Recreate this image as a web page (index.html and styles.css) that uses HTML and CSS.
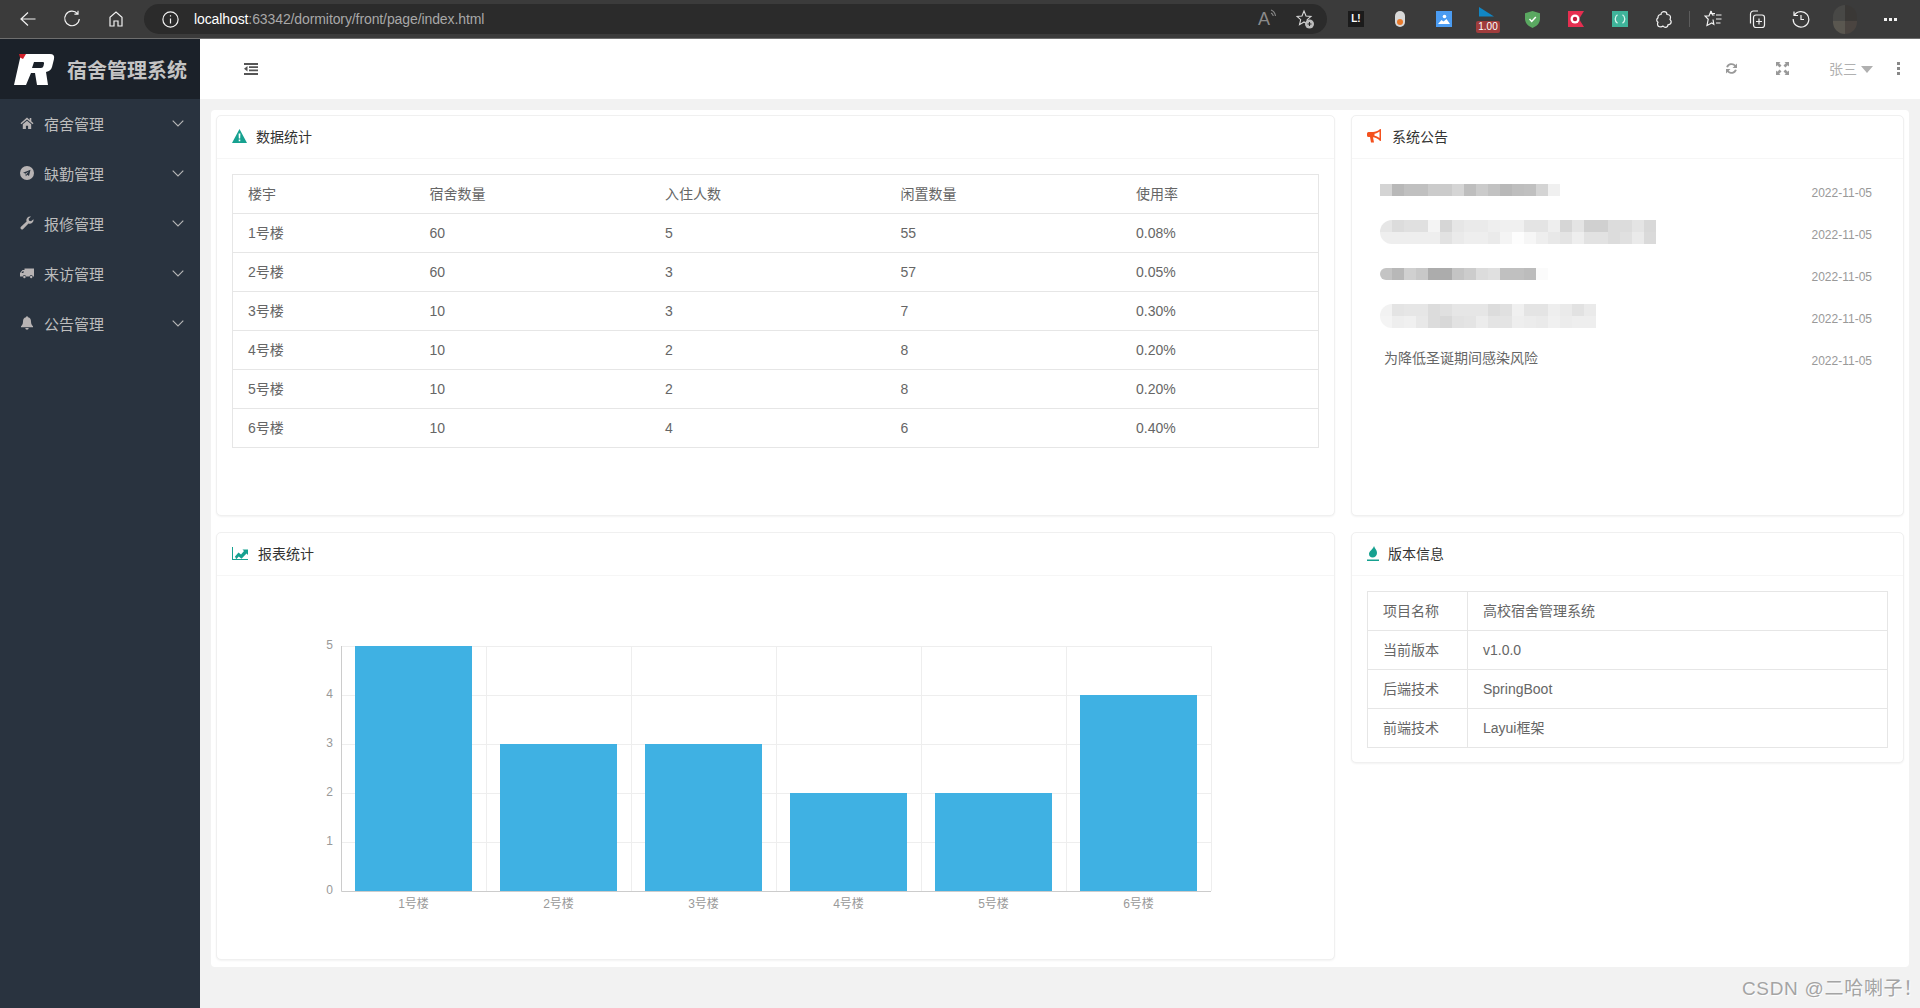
FILE: index.html
```html
<!DOCTYPE html>
<html lang="zh-CN">
<head>
  <meta charset="UTF-8">
  <title>宿舍管理系统</title>
  <link rel="stylesheet" href="styles.css">
</head>
<body>

  <!-- Browser toolbar -->
  <div class="browser-bar">
    <div class="tool"><svg width="18" height="18" viewBox="0 0 18 18" class="line"><path d="M16.500 9H2M9 2.500 2 9l7 6.500"/></svg></div>
    <div class="tool"><svg width="18" height="18" viewBox="0 0 18 18" class="line"><path d="M14.500 3.600A7.300 7.300 0 1 0 16.300 9M15 .8v3.400h-3.600"/></svg></div>
    <div class="tool"><svg width="18" height="18" viewBox="0 0 18 18" class="line"><path d="M3 16V7.200L9 2l6 5.200V16h-4v-5H7v5z"/></svg></div>
    <div class="address">
      <svg width="17" height="17" viewBox="0 0 17 17" class="line"><circle cx="8.500" cy="8.500" r="7.600"/><path d="M8.500 7.500v5M8.500 4.200v1.400"/></svg>
      <div class="url"><span class="url-host">localhost</span>:63342/dormitory/front/page/index.html</div>
      <div class="read-aloud">A<svg width="7" height="11" viewBox="0 0 7 11" class="line-dim"><path d="M1 1c3 1 4 3 4.500 6M1 4c1.500.6 2 1.500 2.300 3"/></svg></div>
      <svg width="19" height="21" viewBox="0 0 19 21" class="line-dim fav"><path d="M8 2l2 5 5 .4-3.800 3.300 1.200 5L8 13l-4.500 2.700 1.200-5L1 7.400 6 7z"/><circle class="fav-dot" cx="13.500" cy="15" r="4.500"/><path class="fav-plus" d="M11.500 15h4M13.500 13v4"/></svg>
    </div>
    <div class="ext"><span class="ext-l">L!</span></div>
    <div class="ext"><span class="ext-pill"><i></i></span></div>
    <div class="ext"><svg width="16" height="16" viewBox="0 0 16 16"><rect width="16" height="16" fill="#4b9cf2"/><circle cx="8.500" cy="5.500" r="1.800" fill="#fff"/><path d="M2 13l3.500-4 2 1.500L10.500 8l3.500 5z" fill="#fff"/></svg></div>
    <div class="ext ext-speed"><svg width="15" height="10" viewBox="0 0 15 10"><path d="M0 0l15 9.500H0z" fill="#1186c4"/></svg><span class="speed-badge">1.00</span></div>
    <div class="ext"><svg width="15" height="17" viewBox="0 0 15 17"><path d="M7.500 0l7.500 2.200V8c0 4.500-4 7.500-7.500 9C4 15.500 0 12.500 0 8V2.200z" fill="#5aa861"/><path d="M4.500 8l2.200 2.400L10.800 6" fill="none" stroke="#fff" stroke-width="1.500"/></svg></div>
    <div class="ext"><svg width="16" height="16" viewBox="0 0 16 16"><path d="M0 0h16l-5 8 5 8H0z" fill="#e62e50"/><circle cx="7" cy="8" r="4.500" fill="#fff"/><circle cx="7" cy="8" r="2.200" fill="#c4183a"/></svg></div>
    <div class="ext"><svg width="16" height="16" viewBox="0 0 16 16"><rect width="16" height="16" fill="#3fb49a"/><path d="M5.500 3.800a5 5 0 0 0 0 8.400M10.500 12.200a5 5 0 0 0 0-8.400" fill="none" stroke="#d8f3ec" stroke-width="1.300"/></svg></div>
    <div class="ext"><svg width="16" height="17" viewBox="0 0 16 17" class="line"><path d="M5 3.500C5 1.500 6.500.7 8 .7s3 .8 3 2.800c2 0 3.500 1 3.500 3 0 .8-.2 1.300-.5 1.800.6.700 1.200 1.500 1.200 2.500 0 2-1.300 2.800-3.200 3 0 1.500-1.200 2.500-2.700 2.500-1 0-1.600-.5-2.300-1.200-.7.500-1.300.8-2 .8C2.500 15.900 1.500 14.500 1.500 13c0-.7.200-1.200.5-1.700C1.200 10.700.7 9.900.7 9c0-1 .7-1.800 1.300-2.300C1.800 5 3 3.500 5 3.500z"/></svg></div>
    <div class="bar-sep"></div>
    <div class="ext"><svg width="18" height="18" viewBox="0 0 18 18" class="line"><path d="M11 3.500H6.300L7 1 5 6H1l3.200 3.300L3 15.500l4.800-2.500 2 1.200L9 9.500"/><path d="M7 1l1.500 4h2M12 5h5.500M12 9h5.500M12 13h4.500"/></svg></div>
    <div class="ext"><svg width="18" height="19" viewBox="0 0 18 19" class="line"><path d="M2.500 13.500V4a3 3 0 0 1 3-3H10"/><rect x="5.500" y="5" width="11" height="12.500" rx="2.500"/><path d="M11 8.500v6M8 11.500h6"/></svg></div>
    <div class="ext"><svg width="18" height="18" viewBox="0 0 18 18" class="line"><path d="M2.200 5.500A7.800 7.800 0 1 1 1.200 9M2 1.500v4h4M9 5v4.500h3"/></svg></div>
    <div class="ext"><span class="avatar"></span></div>
    <div class="ext ext-last"><svg width="13" height="3" viewBox="0 0 13 3" class="dots"><rect width="3" height="3"/><rect x="5" width="3" height="3"/><rect x="10" width="3" height="3"/></svg></div>
  </div>

  <div class="app">
    <!-- Sidebar -->
    <aside class="sidebar">
      <div class="logo">
        <svg class="logo-mark" width="41" height="31" viewBox="0 0 41 31">
          <path d="M7 0H36Q41 0 40 5L38 13Q37 17 32 18L34 31H23L21 19H17L12 31H0Z M20 8 18 14H27Q29 14 29.500 12L30 9.500Q30.500 8 29 8Z" fill="#fff" fill-rule="evenodd"/>
          <path d="M5 0H12L9 5 6 3.500Z" fill="#d3202a"/>
        </svg>
        <div class="logo-title">宿舍管理系统</div>
      </div>
      <ul class="menu">
        <li class="menu-item">
          <svg class="menu-icon" viewBox="0 0 14 14"><path d="M7 1.500 .5 7.300l.9 1L7 3.400l5.600 4.900.9-1L11.300 5.300V2H9.700v1.900zM2.800 8.300V13h3.100V9.700h2.200V13h3.100V8.300L7 4.700z"/></svg>
          <span class="menu-text">宿舍管理</span>
          <svg class="chevron" width="12" height="7" viewBox="0 0 12 7"><path d="M.7.7 6 6 11.300.7"/></svg>
        </li>
        <li class="menu-item">
          <svg class="menu-icon" viewBox="0 0 14 14"><circle cx="7" cy="7" r="7"/><path class="menu-cut" d="M10.500 3.700 3 6.700l2.200.9.700 2.600 1.400-1.500 1.700 1.300zM5.500 7.500l3.300-2-2.500 2.700-.2 1.200z"/></svg>
          <span class="menu-text">缺勤管理</span>
          <svg class="chevron" width="12" height="7" viewBox="0 0 12 7"><path d="M.7.7 6 6 11.300.7"/></svg>
        </li>
        <li class="menu-item">
          <svg class="menu-icon" viewBox="0 0 14 14"><path d="M13.500 3.200a3.800 3.800 0 0 1-5 4.200L3.200 13a1.500 1.500 0 0 1-2.200-2.200l5.600-5.300a3.800 3.800 0 0 1 4.400-5L8.600 2.800 9 4.800l2 .4z"/></svg>
          <span class="menu-text">报修管理</span>
          <svg class="chevron" width="12" height="7" viewBox="0 0 12 7"><path d="M.7.7 6 6 11.300.7"/></svg>
        </li>
        <li class="menu-item">
          <svg class="menu-icon" viewBox="0 0 14 14"><path d="M4.500 2.500H14v8h-1.200a1.600 1.600 0 0 0-3.200 0H6a1.600 1.600 0 0 0-3.200 0H0V7l2.500-3h2zM1.300 7h2.200V5H3z"/><circle cx="4.400" cy="11" r="1.200"/><circle cx="11.200" cy="11" r="1.200"/></svg>
          <span class="menu-text">来访管理</span>
          <svg class="chevron" width="12" height="7" viewBox="0 0 12 7"><path d="M.7.7 6 6 11.300.7"/></svg>
        </li>
        <li class="menu-item">
          <svg class="menu-icon" viewBox="0 0 14 14"><path d="M7 .3a1 1 0 0 1 1 1c2.200.5 3 2.200 3 4.200 0 2.700 1 3.700 2 4.800v1H1v-1c1-1.100 2-2.100 2-4.800 0-2 .8-3.700 3-4.200a1 1 0 0 1 1-1zM5.300 12h3.400a1.700 1.700 0 0 1-3.400 0z"/></svg>
          <span class="menu-text">公告管理</span>
          <svg class="chevron" width="12" height="7" viewBox="0 0 12 7"><path d="M.7.7 6 6 11.300.7"/></svg>
        </li>
      </ul>
    </aside>

    <div class="main">
      <!-- Top header -->
      <header class="header">
        <svg class="fold" width="14" height="12" viewBox="0 0 14 12"><path d="M0 0h14v2H0zM5 3.300h9v1.700H5zM5 6.500h9v1.700H5zM0 10h14v2H0zM3.500 3v5.500L0 5.800z"/></svg>
        <div class="header-right">
          <svg class="head-icon" width="13" height="13" viewBox="0 0 13 13"><path d="M1.200 5A5.500 5.500 0 0 1 10.500 3L12 1.500V6H7.500L9.300 4.200A3.800 3.800 0 0 0 3 5.500zM11.800 8A5.500 5.500 0 0 1 2.500 10L1 11.500V7h4.500L3.700 8.800A3.800 3.800 0 0 0 10 7.500z"/></svg>
          <svg class="head-icon head-expand" width="13" height="13" viewBox="0 0 13 13"><path d="M0 0h4.500L3.200 1.300 5.500 3.600 3.600 5.500 1.300 3.200 0 4.500zM13 0v4.500l-1.300-1.300-2.300 2.300-1.900-1.900 2.300-2.300L8.500 0zM0 13V8.500l1.300 1.300 2.300-2.300 1.900 1.900-2.300 2.300L4.500 13zM13 13H8.500l1.300-1.300-2.300-2.300 1.900-1.900 2.300 2.300L13 8.500z"/></svg>
          <div class="user">张三<span class="caret"></span></div>
          <div class="more"><i></i><i></i><i></i></div>
        </div>
      </header>

      <main class="content">
        <div class="dash">
          <!-- 数据统计 -->
          <section class="card">
            <div class="card-head">
              <svg width="15" height="14" viewBox="0 0 15 14"><path class="teal" d="M7.500 0 15 14H0zM6.600 4.500l.2 5h1.400l.2-5zM6.700 10.500v1.800h1.600v-1.800z" fill-rule="evenodd"/></svg>
              <span class="card-title t-stats">数据统计</span>
            </div>
            <div class="card-body">
              <table class="grid-table stats">
                <thead>
                  <tr><th>楼宇</th><th>宿舍数量</th><th>入住人数</th><th>闲置数量</th><th>使用率</th></tr>
                </thead>
                <tbody>
                  <tr><td>1号楼</td><td>60</td><td>5</td><td>55</td><td>0.08%</td></tr>
                  <tr><td>2号楼</td><td>60</td><td>3</td><td>57</td><td>0.05%</td></tr>
                  <tr><td>3号楼</td><td>10</td><td>3</td><td>7</td><td>0.30%</td></tr>
                  <tr><td>4号楼</td><td>10</td><td>2</td><td>8</td><td>0.20%</td></tr>
                  <tr><td>5号楼</td><td>10</td><td>2</td><td>8</td><td>0.20%</td></tr>
                  <tr><td>6号楼</td><td>10</td><td>4</td><td>6</td><td>0.40%</td></tr>
                </tbody>
              </table>
            </div>
          </section>

          <!-- 系统公告 -->
          <section class="card">
            <div class="card-head">
              <svg width="15" height="14" viewBox="0 0 15 14"><path class="orange" d="M14 0v12l-1.200-.3C11 9.500 8 8.500 6 8.300L7 13.500H4L3 8H1.500A1.500 1.500 0 0 1 0 6.500V4.500A1.500 1.500 0 0 1 1.500 3H6c2 0 5-1 6.800-2.800zM12.500 2.500C11 3.700 9 4.500 7.500 4.700v2c1.500.2 3.500 1 5 2.200z" fill-rule="evenodd"/></svg>
              <span class="card-title t-notice">系统公告</span>
            </div>
            <ul class="notices">
              <li class="notice"><div class="mosaic m1"></div><div class="notice-date">2022-11-05</div></li>
              <li class="notice"><div class="mosaic m2"></div><div class="notice-date">2022-11-05</div></li>
              <li class="notice"><div class="mosaic m3"></div><div class="notice-date">2022-11-05</div></li>
              <li class="notice"><div class="mosaic m4"></div><div class="notice-date">2022-11-05</div></li>
              <li class="notice"><div class="notice-text">为降低圣诞期间感染风险</div><div class="notice-date">2022-11-05</div></li>
            </ul>
          </section>

          <!-- 报表统计 -->
          <section class="card">
            <div class="card-head">
              <svg width="16" height="13" viewBox="0 0 16 13"><path class="teal" d="M0 0h1v12h15v1H0zM3 9.500l3.500-4 2.500 2L12 4l-1.500-1.500H16V8l-1.500-1.500-5 5.200-2.700-2.200-2.600 2.700z"/></svg>
              <span class="card-title t-chart">报表统计</span>
            </div>
            <svg class="chart" viewBox="217 576 1117 384" width="1117" height="384">
              <g class="grid-lines">
                <path d="M341 646.500H1211M341 695.500H1211M341 744.500H1211M341 793.500H1211M341 842.500H1211"/>
                <path d="M486.500 646V891M631.500 646V891M776.500 646V891M921.500 646V891M1066.500 646V891M1211.500 646V891"/>
              </g>
              <g class="bars">
                <rect x="355" y="646" width="117" height="245"/>
                <rect x="500" y="744" width="117" height="147"/>
                <rect x="645" y="744" width="117" height="147"/>
                <rect x="790" y="793" width="117" height="98"/>
                <rect x="935" y="793" width="117" height="98"/>
                <rect x="1080" y="695" width="117" height="196"/>
              </g>
              <path class="axis" d="M341.500 646V891.500H1211"/>
              <g class="y-labels">
                <text x="333" y="649">5</text>
                <text x="333" y="698">4</text>
                <text x="333" y="747">3</text>
                <text x="333" y="796">2</text>
                <text x="333" y="845">1</text>
                <text x="333" y="894">0</text>
              </g>
              <g class="x-labels">
                <text x="413.500" y="908">1号楼</text>
                <text x="558.500" y="908">2号楼</text>
                <text x="703.500" y="908">3号楼</text>
                <text x="848.500" y="908">4号楼</text>
                <text x="993.500" y="908">5号楼</text>
                <text x="1138.500" y="908">6号楼</text>
              </g>
            </svg>
          </section>

          <!-- 版本信息 -->
          <section class="card card-version">
            <div class="card-head">
              <svg width="12" height="15" viewBox="0 0 12 15"><path class="teal" d="M7 0c1 3 3 4 3 7 0 2.500-2 4.500-4.500 4.500C3.500 11.500 2 10 2 8c0-3 4-4.500 5-8zM0 13.500h12V15H0z"/></svg>
              <span class="card-title t-version">版本信息</span>
            </div>
            <div class="card-body">
              <table class="grid-table version">
                <tbody>
                  <tr><td>项目名称</td><td>高校宿舍管理系统</td></tr>
                  <tr><td>当前版本</td><td>v1.0.0</td></tr>
                  <tr><td>后端技术</td><td>SpringBoot</td></tr>
                  <tr><td>前端技术</td><td>Layui框架</td></tr>
                </tbody>
              </table>
            </div>
          </section>
        </div>
      </main>
    </div>
  </div>

  <div class="watermark">CSDN @二哈喇子！</div>
</body>
</html>
```

FILE: styles.css
```css
* { margin:0; padding:0; box-sizing:border-box; }
html, body { height:100%; overflow:hidden; }
body { display:flex; flex-direction:column; font-family:"Liberation Sans","Noto Sans CJK SC",sans-serif; font-size:14px; color:#666; background:#f2f2f2; }
ul { list-style:none; }

/* Browser toolbar */
.browser-bar { display:flex; align-items:center; height:39px; flex:none; padding:0 8px 0 6px; background:#3b3b3b; border-bottom:1px solid #6e6e6e; }
.tool { width:44px; display:flex; justify-content:center; }
.line { fill:none; stroke:#f2f2f2; stroke-width:1.2; }
.line-dim { fill:none; stroke:#8a8a8a; stroke-width:1.1; }
.address { display:flex; align-items:center; flex:1; height:30px; margin:0 7px 0 6px; padding:0 12px 0 18px; border-radius:15px; background:#2b2b2b; }
.url { flex:1; margin-left:15px; color:#a8a8a8; font-size:14px; letter-spacing:-.1px; }
.url-host { color:#fff; }
.read-aloud { display:flex; align-items:flex-start; margin-right:19px; color:#8a8a8a; font-size:18px; line-height:20px; }
.fav-dot { fill:#bdbdbd; stroke:none; }
.fav-plus { stroke:#2b2b2b; }
.fav { stroke:#d8d8d8; }
.ext { position:relative; width:44px; display:flex; justify-content:center; align-items:center; height:38px; }
.ext-l { width:16px; height:16px; background:#1b1b1b; color:#fff; font-size:10px; font-weight:bold; line-height:16px; text-align:center; }
.ext-pill { display:flex; align-items:flex-end; justify-content:center; width:10px; height:16px; padding-bottom:2px; border-radius:5px; background:#d8d8d8; }
.ext-pill i { width:6px; height:6px; border-radius:50%; background:#e8792b; }
.ext-speed svg { margin:-14px 0 0 -4px; }
.speed-badge { position:absolute; left:10px; top:21px; width:24px; height:12px; border-radius:2px; background:#a03c3c; color:#fff; font-size:10px; line-height:12px; text-align:center; }
.bar-sep { width:1px; height:16px; margin:0 1px 0 3px; background:#5c5c5c; }
.avatar { width:24px; height:29px; border-radius:12px; background:linear-gradient(90deg,#484846 50%,#3a3836 50%) top/100% 55% no-repeat,linear-gradient(90deg,#5a5750 50%,#4a4440 50%); }
.dots { fill:#f2f2f2; }
.ext-last { margin-left:1px; }

.app { flex:1; display:flex; min-height:0; }

/* Sidebar */
.sidebar { width:200px; flex:none; background:#29333f; }
.logo { display:flex; align-items:center; height:60px; padding-left:14px; background:#1b2129; }
.logo-mark { flex:none; }
.logo-title { margin-left:12px; color:#c4c4c4; font-size:20px; font-weight:bold; white-space:nowrap; }
.menu-item { display:flex; align-items:center; height:50px; padding:0 0 2px 20px; color:#bdbdbd; font-size:15px; }
.menu-icon { width:14px; height:14px; flex:none; fill:#b8b4b4; }
.menu-cut { fill:#29333f; }
.menu-text { flex:1; margin-left:10px; }
.chevron { flex:none; margin-right:16px; fill:none; stroke:#b8b8b8; stroke-width:1.1; }

/* Header */
.main { flex:1; display:flex; flex-direction:column; min-width:0; }
.header { display:flex; align-items:center; justify-content:space-between; height:60px; flex:none; padding:0 20px 2px 44px; background:#fff; }
.fold { fill:#555; margin-top:2px; }
.header-right { display:flex; align-items:center; }
.head-icon { fill:#999; }
.head-expand { margin-left:38px; }
.user { display:flex; align-items:center; margin-left:40px; color:#b0b0b0; }
.caret { width:0; height:0; margin:3px 0 0 4px; border:6px solid transparent; border-top:7px solid #b0b0b0; border-bottom:0; }
.more { display:flex; flex-direction:column; gap:2px; margin-left:24px; }
.more i { width:3px; height:3px; background:#888; }

/* Content */
.content { flex:1; min-height:0; padding:11px 11px 41px; }
.dash { display:grid; grid-template-columns:1119px 553px; grid-template-rows:401px 428px; gap:16px; padding:5px 6px 7px 5px; border-radius:4px; background:#fff; }
.card { border:1px solid #f0f0f0; border-radius:5px; background:#fff; box-shadow:0 1px 2px rgba(0,0,0,.05); }
.card-version { align-self:start; height:231px; }
.card-head { display:flex; align-items:center; height:43px; padding:0 0 2px 15px; border-bottom:1px solid #f6f6f6; color:#333; }
.card-body { padding:15px; }
.t-stats { margin-left:9px; }
.t-notice { margin-left:10px; }
.t-chart { margin-left:10px; }
.t-version { margin-left:9px; }
.teal { fill:#16a190; }
.orange { fill:#f4511e; }

/* Tables */
.grid-table { width:100%; border-collapse:collapse; table-layout:fixed; border:1px solid #e6e6e6; }
.grid-table th, .grid-table td { padding:9px 15px; border:1px solid #e6e6e6; line-height:20px; font-weight:normal; text-align:left; }
.stats th, .stats td { border-left:0; border-right:0; }
.stats th:nth-child(1) { width:182px; }
.stats th:nth-child(2), .stats th:nth-child(3), .stats th:nth-child(4) { width:235.5px; }
.version td:first-child { width:100px; }

/* Notices */
.notices { padding:10px 31px 0 28px; }
.notice { display:flex; align-items:center; justify-content:space-between; height:42px; }
.notice-date { margin-top:6px; color:#999; font-size:12px; }
.notice-text { margin:-2px 0 0 4px; }
.mosaic { background-repeat:no-repeat; }
.m1 { width:180px; height:12px; background-image:linear-gradient(90deg,#d4d4d4 0 12px,#b8b8b8 12px 24px,#c0c0c0 24px 48px,#cbcbcb 48px 72px,#d5d5d5 72px 84px,#bebebe 84px 96px,#cbcbcb 96px 108px,#c2c2c2 108px 120px,#b8b8b8 120px 132px,#bebebe 132px 144px,#c0c0c0 144px 156px,#d4d4d4 156px 168px,#f0f0f0 168px 180px); }
.m2 { width:276px; height:24px; border-radius:12px 0 0 12px; background-image:linear-gradient(90deg,#e6e6e6 0 12px,#dcdcdc 12px 24px,#e0e0e0 24px 48px,#f4f4f4 48px 60px,#d6d6d6 60px 72px,#e6e6e6 72px 84px,#eaeaea 84px 108px,#eee 108px 120px,#f0f0f0 120px 144px,#e4e4e4 144px 168px,#eee 168px 180px,#d6d6d6 180px 192px,#e4e4e4 192px 204px,#d0d0d0 204px 228px,#dcdcdc 228px 252px,#e4e4e4 252px 264px,#d8d8d8 264px 276px),linear-gradient(90deg,#eee 0 60px,#e2e2e2 60px 72px,#eaeaea 72px 84px,#eee 84px 108px,#eaeaea 108px 120px,#f4f4f4 120px 132px,#fdfdfd 132px 144px,#f6f6f6 144px 156px,#eee 156px 168px,#e8e8e8 168px 180px,#e4e4e4 180px 192px,#eee 192px 204px,#e2e2e2 204px 228px,#dcdcdc 228px 240px,#e0e0e0 240px 252px,#eaeaea 252px 264px,#dadada 264px 276px); background-size:100% 12px; background-position:top,bottom; }
.m3 { width:168px; height:12px; border-radius:6px 0 0 6px; background-image:linear-gradient(90deg,#c4c4c4 0 12px,#b8b8b8 12px 24px,#d0d0d0 24px 36px,#c8c8c8 36px 48px,#acacac 48px 72px,#c4c4c4 72px 84px,#ccc 84px 96px,#dcdcdc 96px 108px,#e0e0e0 108px 120px,#c0c0c0 120px 144px,#bcbcbc 144px 156px,#fbfbfb 156px 168px); }
.m4 { width:216px; height:24px; border-radius:12px 0 0 12px; background-image:linear-gradient(90deg,#f2f2f2 0 12px,#e4e4e4 12px 24px,#e6e6e6 24px 48px,#dcdcdc 48px 60px,#e0e0e0 60px 72px,#e6e6e6 72px 108px,#dcdcdc 108px 120px,#e0e0e0 120px 132px,#f0f0f0 132px 144px,#e4e4e4 144px 168px,#eee 168px 180px,#eaeaea 180px 192px,#e2e2e2 192px 204px,#eaeaea 204px 216px),linear-gradient(90deg,#f4f4f4 0 12px,#eee 12px 24px,#f0f0f0 24px 36px,#e8e8e8 36px 48px,#dcdcdc 48px 60px,#d8d8d8 60px 72px,#e2e2e2 72px 84px,#e4e4e4 84px 96px,#ececec 96px 108px,#e4e4e4 108px 132px,#eee 132px 144px,#ececec 144px 156px,#eaeaea 156px 168px,#f0f0f0 168px 180px,#ececec 180px 192px,#eee 192px 216px); background-size:100% 12px; background-position:top,bottom; }

/* Chart */
.chart { display:block; }
.grid-lines { fill:none; stroke:#eee; }
.bars { fill:#3fb1e3; }
.axis { fill:none; stroke:#ccc; }
.y-labels text { fill:#999; font-size:12px; text-anchor:end; }
.x-labels text { fill:#999; font-size:12px; text-anchor:middle; }

.watermark { position:absolute; right:-3px; bottom:8px; color:#a4a4a4; font-size:19px; line-height:22px; letter-spacing:.7px; text-shadow:1px 1px 1px #fff; white-space:nowrap; }
```
